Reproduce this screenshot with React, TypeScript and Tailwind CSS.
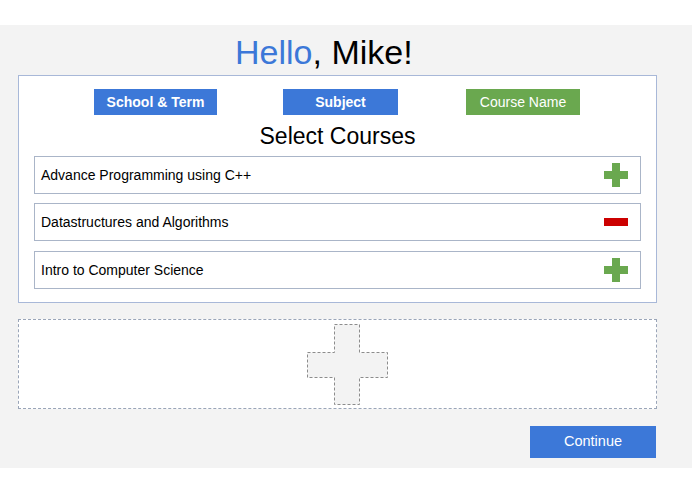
import React from "react";

function PlusIcon() {
  return (
    <svg width="24" height="24" viewBox="0 0 24 24" className="block">
      <path d="M8 0H16V8H24V16H16V24H8V16H0V8H8Z" fill="#6aa84f" />
    </svg>
  );
}

function MinusIcon() {
  return (
    <svg width="24" height="24" viewBox="0 0 24 24" className="block">
      <rect x="0" y="8" width="24" height="8" fill="#cc0000" />
    </svg>
  );
}

function CourseRow({ name, selected, className }: { name: string; selected: boolean; className?: string }) {
  return (
    <div
      className={
        "flex h-[38px] items-center justify-between border border-[#aab5c8] bg-white pl-[6px] pr-[12px] " +
        (className ?? "")
      }
    >
      <span className="text-[14px] text-black">{name}</span>
      {selected ? <MinusIcon /> : <PlusIcon />}
    </div>
  );
}

export default function App() {
  return (
    <div className="h-[494px] w-[695px] bg-white pt-[25px] font-['Liberation_Sans',Arial,sans-serif]">
      <div className="flex h-[443px] w-[692px] flex-col bg-[#f3f3f3]">
        <div className="h-[50px] pl-[235px] pt-[10px]">
          <h1 className="text-[34px] leading-[34px] text-black">
            <span className="text-[#3c78d8]">Hello</span>, Mike!
          </h1>
        </div>

        <div className="ml-[18px] flex h-[228px] w-[639px] flex-col border border-[#a8b8d8] bg-white">
          <div className="mt-[13px] flex h-[26px] pl-[75px]">
            <div className="flex w-[123px] items-center justify-center bg-[#3c78d8] text-[14px] font-bold text-white">
              School &amp; Term
            </div>
            <div className="ml-[66px] flex w-[115px] items-center justify-center bg-[#3c78d8] text-[14px] font-bold text-white">
              Subject
            </div>
            <div className="ml-[68px] flex w-[114px] items-center justify-center bg-[#6aa84f] text-[14px] text-white">
              Course Name
            </div>
          </div>

          <div className="mt-[10px] text-center text-[23px] leading-[23px] text-black">Select Courses</div>

          <div className="mt-[8px] flex flex-col px-[15px]">
            <CourseRow name="Advance Programming using C++" selected={false} />
            <CourseRow name="Datastructures and Algorithms" selected={true} className="mt-[9px]" />
            <CourseRow name="Intro to Computer Science" selected={false} className="mt-[10px]" />
          </div>
        </div>

        <div className="ml-[18px] mt-[16px] flex h-[90px] w-[639px] items-center border border-dashed border-[#9aa5b8] bg-white pl-[288px]">
          <svg width="81" height="81" viewBox="0 0 81 81" className="block">
            <path
              d="M27.5 0.5H52.5V28.5H80.5V53.5H52.5V80.5H27.5V53.5H0.5V28.5H27.5Z"
              fill="#f3f3f3"
              stroke="#8c8c8c"
              strokeWidth="1"
              strokeDasharray="3 2"
            />
          </svg>
        </div>

        <div className="ml-[530px] mt-[17px] flex h-[32px] w-[126px] items-center justify-center bg-[#3c78d8] text-[14.5px] text-white">
          Continue
        </div>
      </div>
    </div>
  );
}
